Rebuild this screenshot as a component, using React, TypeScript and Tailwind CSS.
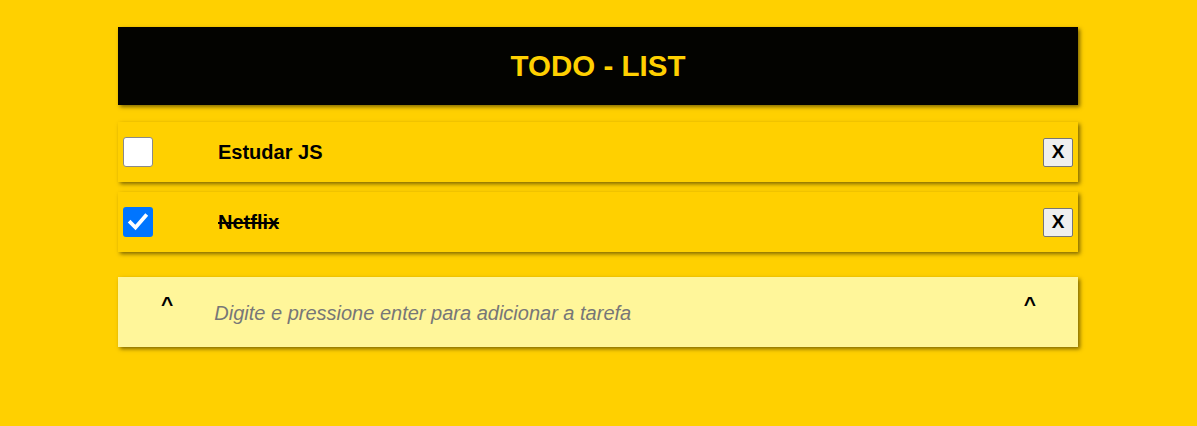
import React from "react";

const shadow = "shadow-[2px_2px_4px_rgba(0,0,0,0.5)]";

function Check({ checked }: { checked: boolean }) {
  if (checked) {
    return (
      <div className="w-[30px] h-[30px] rounded-[3px] bg-[#0075ff] flex items-center justify-center">
        <svg width="22" height="22" viewBox="0 0 22 22">
          <path d="M3.5 11.5 L8.5 16.5 L18.5 5" stroke="white" strokeWidth="3.8" fill="none" strokeLinecap="square" />
        </svg>
      </div>
    );
  }
  return <div className="w-[30px] h-[30px] rounded-[3px] bg-white border border-[#8a8a8a]" />;
}

function Row({ text, done }: { text: string; done: boolean }) {
  return (
    <div className={`h-[60px] bg-[#ffd000] ${shadow} flex items-center pl-[5px] pr-[5px]`}>
      <Check checked={done} />
      <span className={`ml-[65px] text-[20px] font-bold text-black flex-1 ${done ? "line-through" : ""}`}>{text}</span>
      <div className="w-[30px] h-[29px] bg-[#efefef] border border-[#767676] rounded-[2px] flex items-center justify-center text-[19px] font-bold text-black">
        X
      </div>
    </div>
  );
}

export default function App() {
  return (
    <div className="min-h-[426px] bg-[#ffd000] pt-[27px]" style={{ fontFamily: '"Liberation Sans", Arial, sans-serif' }}>
      <div className="w-[960px] ml-[118px] flex flex-col">
        <div className={`h-[78px] bg-[#030300] ${shadow} flex items-center justify-center`}>
          <h1 className="text-[29.5px] font-bold text-[#ffd000]">TODO - LIST</h1>
        </div>
        <div className="mt-[17px] flex flex-col gap-[10px]">
          <Row text="Estudar JS" done={false} />
          <Row text="Netflix" done={true} />
        </div>
        <div className={`mt-[25px] h-[70px] bg-[#fff69a] ${shadow} flex items-start`}>
          <span className="ml-[43px] mt-[16px] text-[21px] font-bold text-black leading-none">^</span>
          <span className="ml-[41px] mt-[21px] flex-1 text-[20px] italic text-[#777777]">
            Digite e pressione enter para adicionar a tarefa
          </span>
          <span className="mr-[42px] mt-[16px] text-[21px] font-bold text-black leading-none">^</span>
        </div>
      </div>
    </div>
  );
}
